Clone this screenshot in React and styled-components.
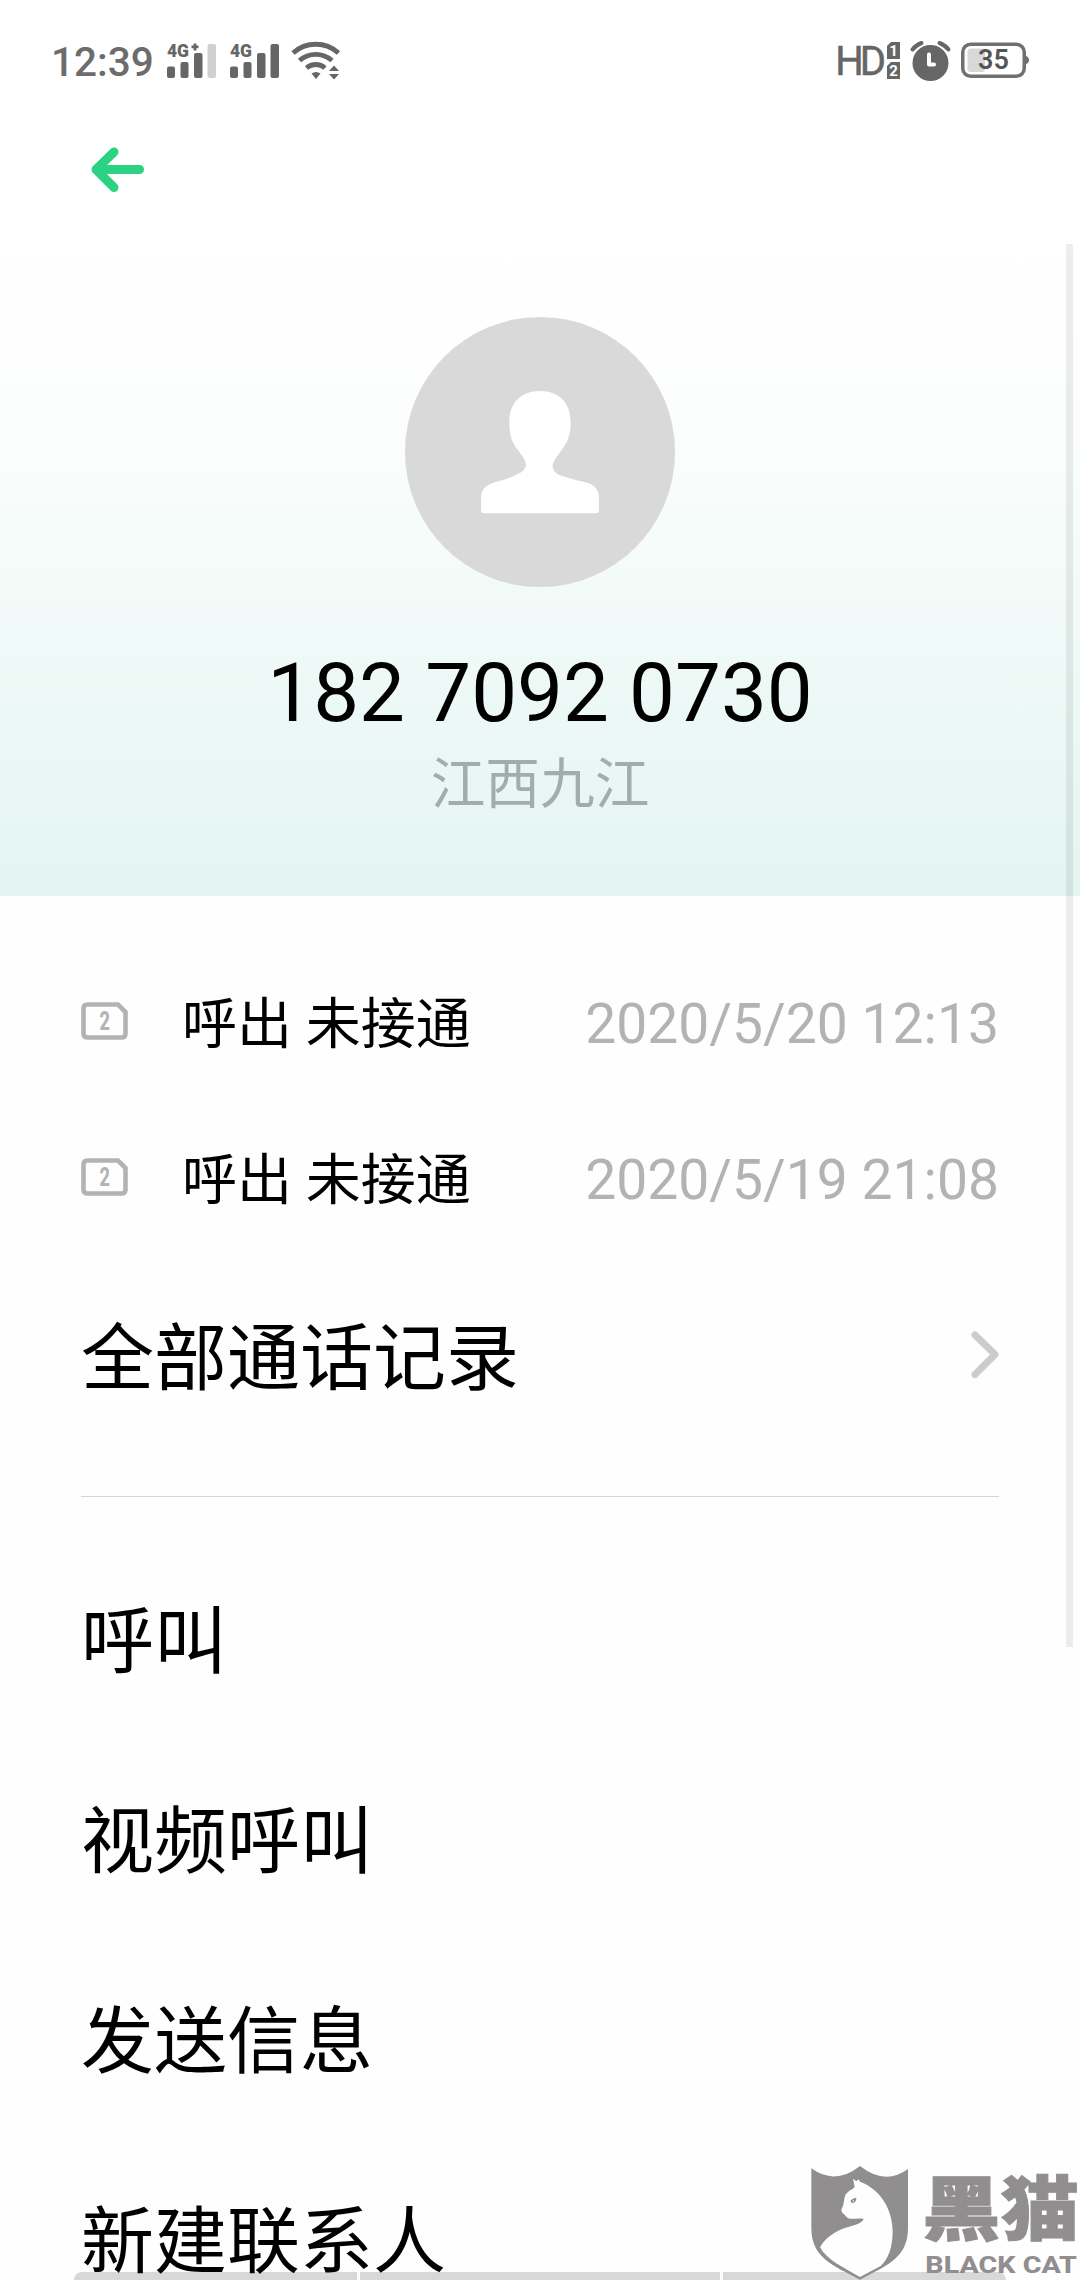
import React from 'react';
import styled, { createGlobalStyle } from 'styled-components';

const calls = [
  { label: '呼出 未接通', time: '2020/5/20 12:13' },
  { label: '呼出 未接通', time: '2020/5/19 21:08' },
];

const actions = ['呼叫', '视频呼叫', '发送信息', '新建联系人'];

const GlobalStyle = createGlobalStyle`
  * {
    box-sizing: border-box;
  }
  body {
    margin: 0;
    background: #fefefe;
    font-family: Roboto, 'Noto Sans CJK SC', sans-serif;
  }
  svg {
    display: block;
    flex: none;
    overflow: visible;
  }
`;

const Signal = ({ label, plus }) => (
  <svg width="50" height="36" viewBox="0 0 50 36" fill="#666">
    <text x="0" y="13.5" fontSize="19" fontWeight="900" textLength="22" lengthAdjust="spacingAndGlyphs">
      {label}
    </text>
    {plus && <path d="M24.5 3.9h7M28 .4v7" stroke="#666" strokeWidth="2.8" />}
    <rect x="0" y="23.5" width="8" height="11.5" rx="2" />
    <rect x="13.5" y="19" width="8" height="16" rx="2" />
    <rect x="27" y="10" width="8.5" height="25" rx="2" />
    <rect x="40.5" y="1" width="8.5" height="34" rx="2" fill={plus ? '#d0d0d0' : '#666'} />
  </svg>
);

const Wifi = () => (
  <svg width="49" height="38" viewBox="0 0 49 38" fill="none" stroke="#666" strokeWidth="4.8">
    <path d="M1 11a34 34 0 0 1 45.5 0" />
    <path d="M7.5 18.500a24.5 24.5 0 0 1 32.5 0" />
    <path d="M14.5 26a14 14 0 0 1 18.5 0" />
    <path d="M19.5 31.5q4.5-3 9 0l-4.5 5.5zM37 29l5-5.5 5 5.500zM37 32h10l-5 5.5z" fill="#666" stroke="none" />
  </svg>
);

const SimSlots = () => (
  <svg width="13" height="37" viewBox="0 0 13 37" fill="#666">
    <path d="M4 0h9v17H0V4z" />
    <path d="M4 20h9v17H0V24z" />
    <g fill="#fff" fontSize="15" fontWeight="700" textAnchor="middle">
      <text x="6.5" y="14">1</text>
      <text x="6.5" y="34">2</text>
    </g>
  </svg>
);

const Alarm = () => (
  <svg width="41" height="40" viewBox="0 0 41 40" fill="none" stroke="#666" strokeWidth="4" strokeLinecap="round">
    <circle cx="20.5" cy="22" r="18" fill="#666" stroke="none" />
    <path d="M2.5 8.5Q6 4 11.5 2M38.5 8.5Q35 4 29.5 2" />
    <path d="M19 13.5v10h5" stroke="#fff" strokeLinejoin="round" />
  </svg>
);

const Battery = () => (
  <svg width="68" height="36" viewBox="0 0 68 36">
    <rect x="1.75" y="1.25" width="61.5" height="32" rx="8" fill="#fff" stroke="#707070" strokeWidth="3.5" />
    <path d="M64 12.5q4 1 4 4.500t-4 4.500z" fill="#707070" />
    <rect x="6.5" y="5.5" width="17.5" height="23.5" rx="3" fill="#d8d8d8" />
    <text x="17" y="26" fontSize="27" fontWeight="600" fill="#555">
      35
    </text>
  </svg>
);

const BackArrow = () => (
  <svg width="54" height="46" viewBox="0 0 54 46" fill="none" stroke="#2bd283" strokeWidth="9" strokeLinecap="round" strokeLinejoin="round">
    <path d="M24 5L6 22.5l18 18" />
    <path d="M8 22.5h41.5" />
  </svg>
);

const Person = () => (
  <svg width="270" height="270" viewBox="75 50 810 810" fill="#fff">
    <path d="M480 272C540 272 572 310 572 366C572 410 560 430 541 455C528 472 518 484 518 497C520 515 530 522 545 526C570 534 590 540 610 544C640 550 657 565 657 592V630Q657 639 648 639H312Q303 639 303 630V592C303 568 320 551 348 545C370 539 390 533 412 522C430 514 438 505 438 492C436 476 424 464 416 452C398 430 388 410 388 366C388 310 420 272 480 272Z" />
  </svg>
);

const SimIcon = () => (
  <svg width="47" height="38" viewBox="0 0 47 38">
    <path
      d="M6.5 2.5H37L44.5 10V31.5Q44.5 35.5 40.5 35.5H6.5Q2.5 35.5 2.5 31.5V6.5Q2.5 2.5 6.5 2.5Z"
      fill="none"
      stroke="#b3b3b3"
      strokeWidth="4.6"
    />
    <text
      x="18.5"
      y="28.3"
      fontSize="25"
      fontWeight="800"
      fill="#b3b3b3"
      textLength="10.5"
      lengthAdjust="spacingAndGlyphs"
    >
      2
    </text>
  </svg>
);

const Chevron = () => (
  <svg width="28" height="48" viewBox="0 0 28 48" fill="none" stroke="#ccc" strokeWidth="7" strokeLinecap="round" strokeLinejoin="round">
    <path d="M4 4l20 19.5L4 43.5" />
  </svg>
);

const BlackCat = () => (
  <svg width="270" height="116" viewBox="90 70 810 348" fill="#918e90">
    <path d="M94 83Q165 135 240 76Q315 135 384 85V262C384 350 325 372 240 417C155 372 94 350 94 262Z" />
    <path
      fill="#fefefe"
      d="M219 114L229 122L236 116L240 123C300 145 338 205 338 272C338 325 322 358 302 376L240 409C190 380 140 358 120 320C140 283 180 265 215 256C235 250 248 244 251 235C235 232 225 236 210 234C200 232 197 225 191 220C184 214 182 208 187 200C194 188 190 172 198 160C205 150 216 148 224 139Z"
    />
    <path d="M211 182q4-9 18-11q0 13-10 16q-6 0-8-5zm8-4q-2 4 2 6q3-4-2-6z" fillRule="evenodd" />
    <text
      x="427"
      y="284"
      fontFamily="'Noto Sans CJK SC', sans-serif"
      fontSize="212"
      fontWeight="900"
      stroke="#918e90"
      strokeWidth="3"
      textLength="470"
      lengthAdjust="spacingAndGlyphs"
    >
      黑猫
    </text>
    <text x="436" y="397" fontSize="69" fontWeight="800" textLength="455" lengthAdjust="spacingAndGlyphs">
      BLACK CAT
    </text>
  </svg>
);

const App = () => {
  return (
    <Screen>
      <GlobalStyle />
      <StatusBar>
        <Clock>12:39</Clock>
        <StatusIcons>
          <Signal label="4G" plus />
          <Signal label="4G" />
          <Wifi />
        </StatusIcons>
        <Hd>HD</Hd>
        <SimSlots />
        <AlarmSlot>
          <Alarm />
        </AlarmSlot>
        <Battery />
      </StatusBar>
      <Toolbar>
        <BackArrow />
      </Toolbar>
      <Profile>
        <Avatar>
          <Person />
        </Avatar>
        <PhoneNumber>182 7092 0730</PhoneNumber>
        <Location>江西九江</Location>
      </Profile>
      <Calls>
        {calls.map((call, index) => (
          <CallRow key={index}>
            <SimIcon />
            <CallLabel>{call.label}</CallLabel>
            <CallTime>{call.time}</CallTime>
          </CallRow>
        ))}
        <AllCalls>
          <AllCallsLabel>全部通话记录</AllCallsLabel>
          <Chevron />
        </AllCalls>
      </Calls>
      <Actions>
        {actions.map((action) => (
          <Action key={action}>{action}</Action>
        ))}
      </Actions>
      <ScrollThumb />
      <GestureBar>
        <Segment />
        <Segment $wide />
        <Segment />
      </GestureBar>
      <Watermark>
        <BlackCat />
      </Watermark>
    </Screen>
  );
};

const Screen = styled.div`
  position: relative;
  width: 1080px;
  height: 2280px;
  overflow: hidden;
  background: #fefefe;
  color: #000;
`;

const StatusBar = styled.header`
  display: flex;
  align-items: center;
  height: 121px;
  padding: 0 51px;
  background: #fff;
`;

const Clock = styled.span`
  width: 116px;
  margin-top: 2px;
  font-size: 40.5px;
  font-weight: 500;
  line-height: 48px;
  color: #6c6c6c;
`;

const StatusIcons = styled.div`
  display: flex;
  align-items: center;
  gap: 12.5px;
  margin-right: auto;
`;

const Hd = styled.span`
  margin: 3px 5px 0 0;
  font-size: 40px;
  line-height: 48px;
  letter-spacing: -4px;
  color: #666;
  -webkit-text-stroke: 0.5px #666;
`;

const AlarmSlot = styled.div`
  margin: 0 10px;
`;

const Toolbar = styled.nav`
  display: flex;
  align-items: flex-start;
  height: 123px;
  padding: 26px 90px 0;
  background: #fff;
`;

const Profile = styled.section`
  display: flex;
  flex-direction: column;
  align-items: center;
  height: 652px;
  padding-top: 73px;
  background: linear-gradient(#fff 0, #fefefe 15%, #f9fdfc 35%, #f1faf8 57%, #e3f5f1 100%);
`;

const Avatar = styled.div`
  width: 270px;
  height: 270px;
  border-radius: 50%;
  background: #d9d9d9;
`;

const PhoneNumber = styled.h1`
  margin: 58px 0 0;
  font-size: 81.7px;
  font-weight: 400;
  line-height: 96px;
`;

const Location = styled.div`
  margin-top: 3px;
  font-size: 54.7px;
  line-height: 80px;
  color: #a2adab;
`;

const Calls = styled.section`
  height: 601px;
  margin: 0 81px;
  padding-top: 47px;
  border-bottom: 1px solid #d5d5d5;
`;

const CallRow = styled.div`
  display: flex;
  align-items: center;
  height: 156px;
`;

const CallLabel = styled.span`
  margin-left: 54px;
  padding-top: 5px;
  font-size: 55px;
  line-height: 80px;
`;

const CallTime = styled.span`
  margin-left: auto;
  padding-top: 6px;
  font-size: 55.2px;
  line-height: 64px;
  color: #b3b3b3;
`;

const AllCalls = styled.div`
  display: flex;
  align-items: center;
  justify-content: space-between;
  height: 200px;
`;

const AllCallsLabel = styled.span`
  padding-bottom: 6px;
  font-size: 73px;
`;

const Actions = styled.ul`
  margin: 0;
  padding: 38px 81px 0;
  list-style: none;
`;

const Action = styled.li`
  display: flex;
  align-items: center;
  height: 200px;
  font-size: 73px;
`;

const ScrollThumb = styled.div`
  position: absolute;
  top: 244px;
  right: 7px;
  width: 7px;
  height: 1403px;
  background: rgba(0, 0, 0, 0.07);
`;

const GestureBar = styled.div`
  position: absolute;
  left: 74px;
  right: 74px;
  bottom: 0;
  display: flex;
  gap: 3px;
  height: 8px;
  border-radius: 8px 8px 0 0;
  overflow: hidden;
`;

const Segment = styled.div`
  flex: ${({ $wide }) => ($wide ? '0 0 360px' : '1')};
  background: rgba(0, 0, 0, 0.15);
`;

const Watermark = styled.div`
  position: absolute;
  right: 0;
  bottom: 0;
  width: 270px;
`;

export default App;
